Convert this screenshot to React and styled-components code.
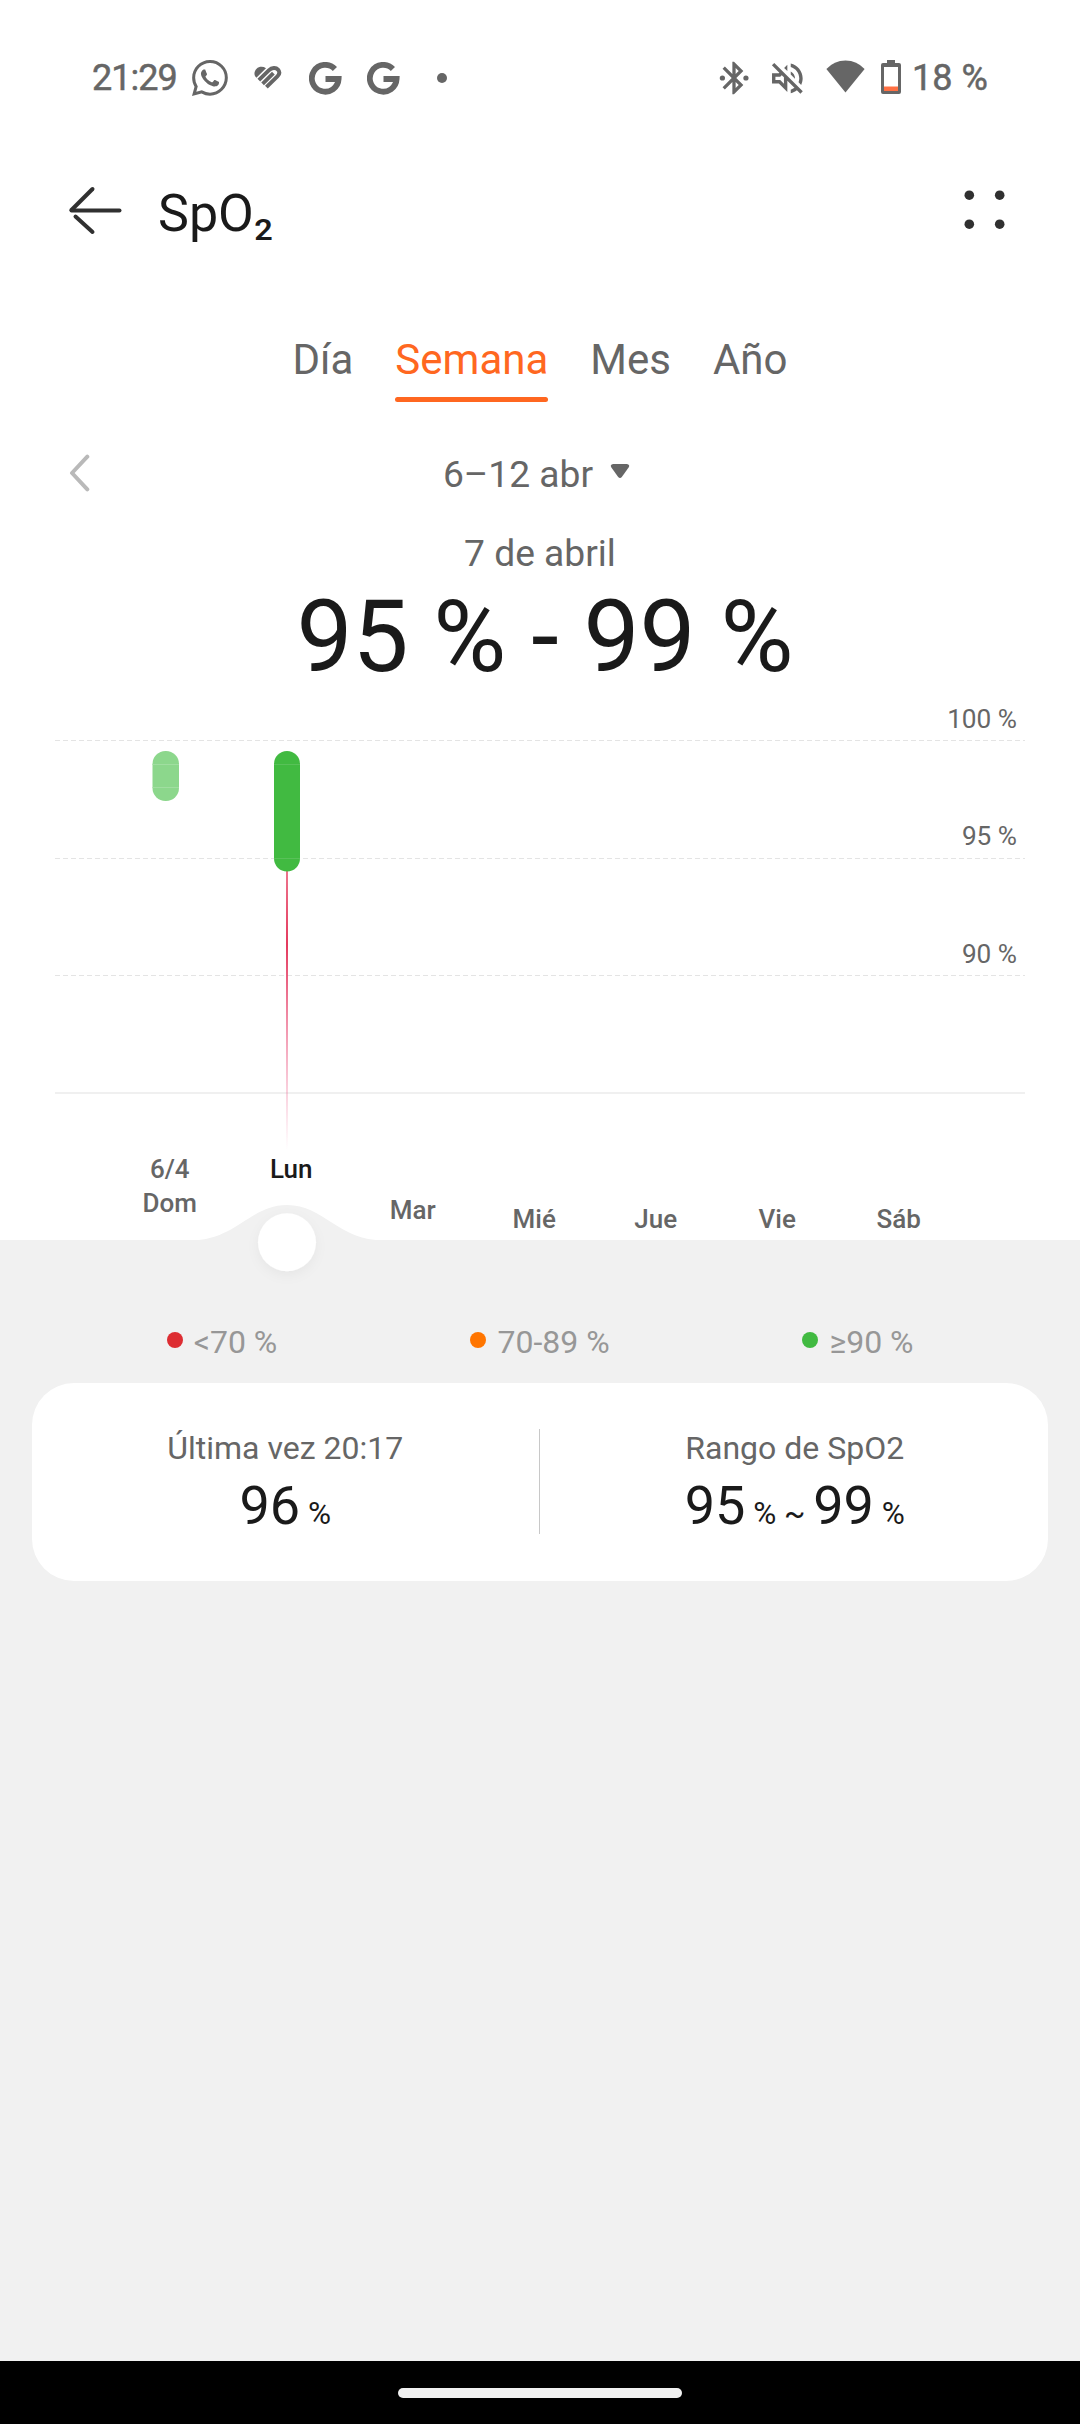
import React from "react";
import styled, { createGlobalStyle } from "styled-components";
import { BsWhatsapp } from "react-icons/bs";

const GlobalStyle = createGlobalStyle`
  * { box-sizing: border-box; }
  html, body { margin: 0; padding: 0; background: #f1f1f1; }
  body { font-family: Roboto, "Noto Sans", sans-serif; color: #1a1a1a; }
`;

const Screen = styled.div`
  width: 1080px;
  height: 2424px;
  display: flex;
  flex-direction: column;
  background: #f1f1f1;
  overflow: hidden;
`;

const TopPanel = styled.div`
  background: #fff;
  height: 1240px;
  display: flex;
  flex-direction: column;
  flex: none;
`;

const StatusBar = styled.div`
  height: 156px;
  padding: 0 92px 0 92px;
  display: flex;
  align-items: center;
  justify-content: space-between;
  color: #666;
`;

const StatusGroup = styled.div`
  display: flex;
  align-items: center;
`;

const StatusText = styled.span`
  width: ${(p) => p.$width}px;
  font-size: 36px;
  line-height: 44px;
  font-weight: 400;
  -webkit-text-stroke: 0.5px #666;
  letter-spacing: ${(p) => p.$track || 0}px;
  white-space: nowrap;
`;

const StatusIcon = styled.span`
  display: flex;
  margin-left: ${(p) => p.$gap}px;
`;

const Header = styled.div`
  height: 110px;
  padding: 0 75px 0 66px;
  display: flex;
  align-items: center;
  justify-content: space-between;
`;

const HeaderStart = styled.div`
  display: flex;
  align-items: center;
  gap: 32px;
`;

const Title = styled.h1`
  margin: 0;
  padding-top: 5px;
  font-size: 52px;
  line-height: 64px;
  font-weight: 400;
`;

const Subscript = styled.span`
  display: inline-block;
  font-size: 30px;
  line-height: 20px;
  font-weight: 600;
  margin-left: 1px;
  transform: translateY(9px) scaleX(1.08);
`;

const Tabs = styled.div`
  display: flex;
  justify-content: center;
  gap: 42px;
  padding-top: 66px;
`;

const Tab = styled.div`
  font-size: 42px;
  line-height: 56px;
  color: ${(p) => (p.$active ? "#ff6720" : "#666")};
  &::after {
    content: "";
    display: block;
    height: 5px;
    margin-top: 9px;
    border-radius: 3px;
    background: ${(p) => (p.$active ? "#ff6720" : "transparent")};
  }
`;

const PeriodRow = styled.div`
  height: 60px;
  margin-top: 42px;
  padding: 0 67px;
  display: grid;
  grid-template-columns: 60px 1fr 60px;
  align-items: center;
`;

const Period = styled.div`
  display: flex;
  justify-content: center;
  align-items: center;
  gap: 17px;
  padding-right: 7px;
  font-size: 37.2px;
  line-height: 60px;
  color: #666;
`;

const SelectedDay = styled.div`
  margin-top: 24px;
  font-size: 37.2px;
  line-height: 50px;
  text-align: center;
  color: #666;
`;

const Range = styled.div`
  margin-top: 4px;
  padding-left: 10px;
  font-size: 99.8px;
  line-height: 110px;
  text-align: center;
  white-space: pre;
`;

const Chart = styled.div`
  position: relative;
  flex: 1;
  display: flex;
  flex-direction: column;
`;

const Plot = styled.svg`
  position: absolute;
  left: 0;
  top: 0;
  display: block;
`;

const GridRow = styled.div`
  height: 117.33px;
  padding: 5px 63px 0 0;
  font-size: 26.2px;
  line-height: 44px;
  text-align: right;
  color: #666;
  position: relative;
`;

const Days = styled.div`
  position: relative;
  display: flex;
  padding: 108px 0 0 109px;
`;

const Day = styled.div`
  width: 121.5px;
  padding-top: ${(p) => p.$drop}px;
  font-size: 26px;
  line-height: 34px;
  font-weight: 500;
  text-align: center;
  white-space: pre-line;
  color: ${(p) => (p.$active ? "#1a1a1a" : "#666")};
`;

const Legend = styled.div`
  height: 143px;
  padding: 61px 63px 0;
  display: flex;
`;

const LegendItem = styled.div`
  flex: 1;
  display: flex;
  justify-content: center;
  gap: 11px;
  height: 82px;
  font-size: 32px;
  line-height: 82px;
  color: #979797;
  &::before {
    content: "";
    width: 16px;
    height: 16px;
    margin-top: 31px;
    border-radius: 50%;
    background: ${(p) => p.$color};
  }
`;

const Card = styled.div`
  margin: 0 32px;
  height: 198px;
  border-radius: 42px;
  background: #fff;
  display: flex;
  align-items: center;
`;

const Stat = styled.div`
  flex: 1;
  padding-top: 11px;
  text-align: center;
`;

const StatLabel = styled.div`
  font-size: 32px;
  line-height: 44px;
  color: #666;
`;

const StatValue = styled.div`
  font-size: 54px;
  line-height: 71px;
  white-space: nowrap;
`;

const Unit = styled.span`
  font-size: 31.5px;
`;

const Divider = styled.div`
  width: 1px;
  height: 105px;
  margin: -1px 2px 0 0;
  background: #c8c8c8;
`;

const NavBar = styled.div`
  margin-top: auto;
  height: 63px;
  background: #000;
  display: flex;
  align-items: center;
  justify-content: center;
`;

const Handle = styled.div`
  width: 284px;
  height: 10px;
  border-radius: 5px;
  background: #f1f1f1;
`;

const HealthIcon = () => (
  <svg width="28" height="24" viewBox="0 0 28 24" fill="none" stroke="#666" strokeWidth="3.9">
    <path d="M2.4 11.8C-0.6 8.8 0.2 5.2 2.6 2.8C5 0.4 9 0.2 12 2.2Z" fill="#666" stroke="none" />
    <path d="M4.8 14.2L14.8 4.4C18 1.3 22 1.4 24 3.6C26 5.8 25.6 8.2 23.4 10.4L12.4 21.2" />
    <path d="M8.6 17.8L19.4 7.2" />
  </svg>
);

const GIcon = () => (
  <svg width="33" height="33" viewBox="0 0 33 33" fill="none" stroke="#666" strokeWidth="5.8">
    <path d="M25.9 7A13.4 13.4 0 1 0 29.6 17H16.5" />
  </svg>
);

const BluetoothIcon = () => (
  <svg width="30" height="34" viewBox="3 1.6 18 20.8" fill="#666">
    <path d="M17.71 7.71L12 2h-1v7.59L6.41 5 5 6.41 10.59 12 5 17.59 6.41 19 11 14.41V22h1l5.71-5.71-4.3-4.29 4.3-4.29zM13 5.83l1.88 1.88L13 9.59V5.83zm1.88 10.46L13 18.17v-3.76l1.88 1.88z" />
    <circle cx="4.9" cy="12" r="1.6" />
    <circle cx="19.3" cy="12" r="1.6" />
  </svg>
);

const MuteIcon = () => (
  <svg width="32" height="33" viewBox="2.4 2.6 18.8 19" fill="#666">
    <path d="M4.34 2.93L2.93 4.34 7.29 8.7 7 9H3v6h4l5 5v-6.59l4.18 4.18c-.65.49-1.38.88-2.18 1.11v2.06c1.34-.3 2.57-.92 3.61-1.75l2.05 2.05 1.41-1.41L4.34 2.93zM10 15.17L7.83 13H5v-2h2.83l.88-.88L10 11.41v3.76zM19 12c0 .82-.15 1.61-.41 2.34l1.53 1.53c.56-1.17.88-2.48.88-3.87 0-4.28-2.99-7.86-7-8.77v2.06c2.89.86 5 3.54 5 6.71zm-7-8l-1.88 1.88L12 7.76zm4.5 8c0-1.77-1.02-3.29-2.5-4.03v1.79l2.48 2.48c.01-.08.02-.16.02-.24z" />
  </svg>
);

const WifiIcon = () => (
  <svg width="39" height="36" viewBox="0 0 39 36" fill="#666">
    <path d="M0.4 9Q8 0.4 19.5 0.4T38.6 9L19.5 32.6Z" />
  </svg>
);

const BatteryIcon = () => (
  <svg width="20" height="37" viewBox="0 0 20 37">
    <path d="M6 0H14V3H18a2 2 0 0 1 2 2V32a2 2 0 0 1-2 2H2a2 2 0 0 1-2-2V5a2 2 0 0 1 2-2H6Z" fill="#666" />
    <path d="M3 7H17V31H3Z" fill="#fff" />
    <path d="M3 26.5H17V31H3Z" fill="#ff7043" />
  </svg>
);

const BackIcon = () => (
  <svg width="60" height="54" viewBox="0 0 60 54" fill="none" stroke="#303030" strokeWidth="4" strokeLinecap="round">
    <path d="M5.5 26.5H53.5" />
    <path d="M5.5 26L26.5 5" />
    <path d="M9.5 32.5L26.5 48" />
  </svg>
);

const MenuIcon = () => (
  <svg width="42" height="42" viewBox="0 0 42 42" fill="#303030">
    {[5.2, 34.2].map((y) =>
      [6.3, 36.7].map((x) => <circle key={x + "-" + y} cx={x} cy={y} r="4.8" />)
    )}
  </svg>
);

const PrevIcon = () => (
  <svg width="26" height="40" viewBox="0 0 26 40" fill="none" stroke="#b9b9b9" strokeWidth="4" strokeLinecap="round" strokeLinejoin="round">
    <path d="M20.3 2.7L5 19L20.3 35.3" />
  </svg>
);

const CaretIcon = () => (
  <svg width="20" height="20" viewBox="0 0 20 20" fill="#666">
    <path d="M3 0H17Q20.4 0.6 18.6 3.6L12 12.8Q10 15.2 8 12.8L1.4 3.6Q-0.4 0.6 3 0Z" />
  </svg>
);

const days = [
  { label: "6/4\nDom", drop: 0 },
  { label: "Lun", drop: 0, active: true },
  { label: "Mar", drop: 41 },
  { label: "Mié", drop: 50 },
  { label: "Jue", drop: 50 },
  { label: "Vie", drop: 50 },
  { label: "Sáb", drop: 50 },
];

export default function App() {
  return (
    <>
      <GlobalStyle />
      <Screen>
        <TopPanel>
          <StatusBar>
            <StatusGroup>
              <StatusText $track={-1} $width={86}>21:29</StatusText>
              <StatusIcon $gap={14}><BsWhatsapp size={36} /></StatusIcon>
              <StatusIcon $gap={26}><HealthIcon /></StatusIcon>
              <StatusIcon $gap={27}><GIcon /></StatusIcon>
              <StatusIcon $gap={25}><GIcon /></StatusIcon>
              <StatusIcon $gap={37}>
                <svg width="10" height="10"><circle cx="5" cy="5" r="5" fill="#666" /></svg>
              </StatusIcon>
            </StatusGroup>
            <StatusGroup>
              <StatusIcon $gap={0}><BluetoothIcon /></StatusIcon>
              <StatusIcon $gap={22}><MuteIcon /></StatusIcon>
              <StatusIcon $gap={23}><WifiIcon /></StatusIcon>
              <StatusIcon $gap={16}><BatteryIcon /></StatusIcon>
              <StatusIcon $gap={11}><StatusText $width={76}>18 %</StatusText></StatusIcon>
            </StatusGroup>
          </StatusBar>

          <Header>
            <HeaderStart>
              <BackIcon />
              <Title>SpO<Subscript>2</Subscript></Title>
            </HeaderStart>
            <MenuIcon />
          </Header>

          <Tabs>
            <Tab>Día</Tab>
            <Tab $active>Semana</Tab>
            <Tab>Mes</Tab>
            <Tab>Año</Tab>
          </Tabs>

          <PeriodRow>
            <PrevIcon />
            <Period>6–12 abr <CaretIcon /></Period>
          </PeriodRow>
          <SelectedDay>7 de abril</SelectedDay>
          <Range>95 % - 99 %</Range>

          <Chart>
            <Plot width="1080" height="610" viewBox="0 692 1080 610">
              <defs>
                <linearGradient id="marker" gradientUnits="userSpaceOnUse" x1="0" y1="740" x2="0" y2="1150">
                  <stop offset="0" stopColor="#e8405f" stopOpacity="0.2" />
                  <stop offset="0.5" stopColor="#e43a5e" />
                  <stop offset="1" stopColor="#f06a9a" stopOpacity="0" />
                </linearGradient>
                <filter id="soft" x="-50%" y="-50%" width="200%" height="200%">
                  <feDropShadow dx="0" dy="4" stdDeviation="6" floodColor="#000" floodOpacity="0.045" />
                </filter>
              </defs>
              {[740.5, 858.5, 975.5].map((y) => (
                <path key={y} d={`M55 ${y}H1025`} stroke="#e4e4e4" strokeWidth="1" strokeDasharray="5 3" />
              ))}
              <path d="M55 1093H1025" stroke="#f0f0f0" strokeWidth="2" />
              <path d="M287 860V1150" stroke="url(#marker)" strokeWidth="2" />
              <rect x="152.5" y="751" width="26.5" height="50" rx="13" fill="#8cd78c" />
              <path d="M152.5 764.5H179M152.5 787.5H179" stroke="#a0dea0" />
              <rect x="274" y="751" width="26" height="120.5" rx="13" fill="#41ba41" />
              <path d="M274 764.5H300M274 858.5H300" stroke="#58c158" />
              <path d="M190 1240.5C236 1240.5 250 1205 287 1205C324 1205 338 1240.5 384 1240.5V1290H190Z" fill="#f1f1f1" />
              <circle cx="287" cy="1242.3" r="29" fill="#fff" filter="url(#soft)" />
            </Plot>
            <GridRow>100 %</GridRow>
            <GridRow>95 %</GridRow>
            <GridRow>90 %</GridRow>
            <Days>
              {days.map((d) => (
                <Day key={d.label} $drop={d.drop} $active={d.active}>{d.label}</Day>
              ))}
            </Days>
          </Chart>
        </TopPanel>

        <Legend>
          <LegendItem $color="#dd2d32">{"<70 %"}</LegendItem>
          <LegendItem $color="#ff7500">70-89 %</LegendItem>
          <LegendItem $color="#41ba41">≥90 %</LegendItem>
        </Legend>

        <Card>
          <Stat>
            <StatLabel>Última vez 20:17</StatLabel>
            <StatValue>96<Unit> %</Unit></StatValue>
          </Stat>
          <Divider />
          <Stat>
            <StatLabel>Rango de SpO2</StatLabel>
            <StatValue>95<Unit> % ~ </Unit>99<Unit> %</Unit></StatValue>
          </Stat>
        </Card>

        <NavBar>
          <Handle />
        </NavBar>
      </Screen>
    </>
  );
}
